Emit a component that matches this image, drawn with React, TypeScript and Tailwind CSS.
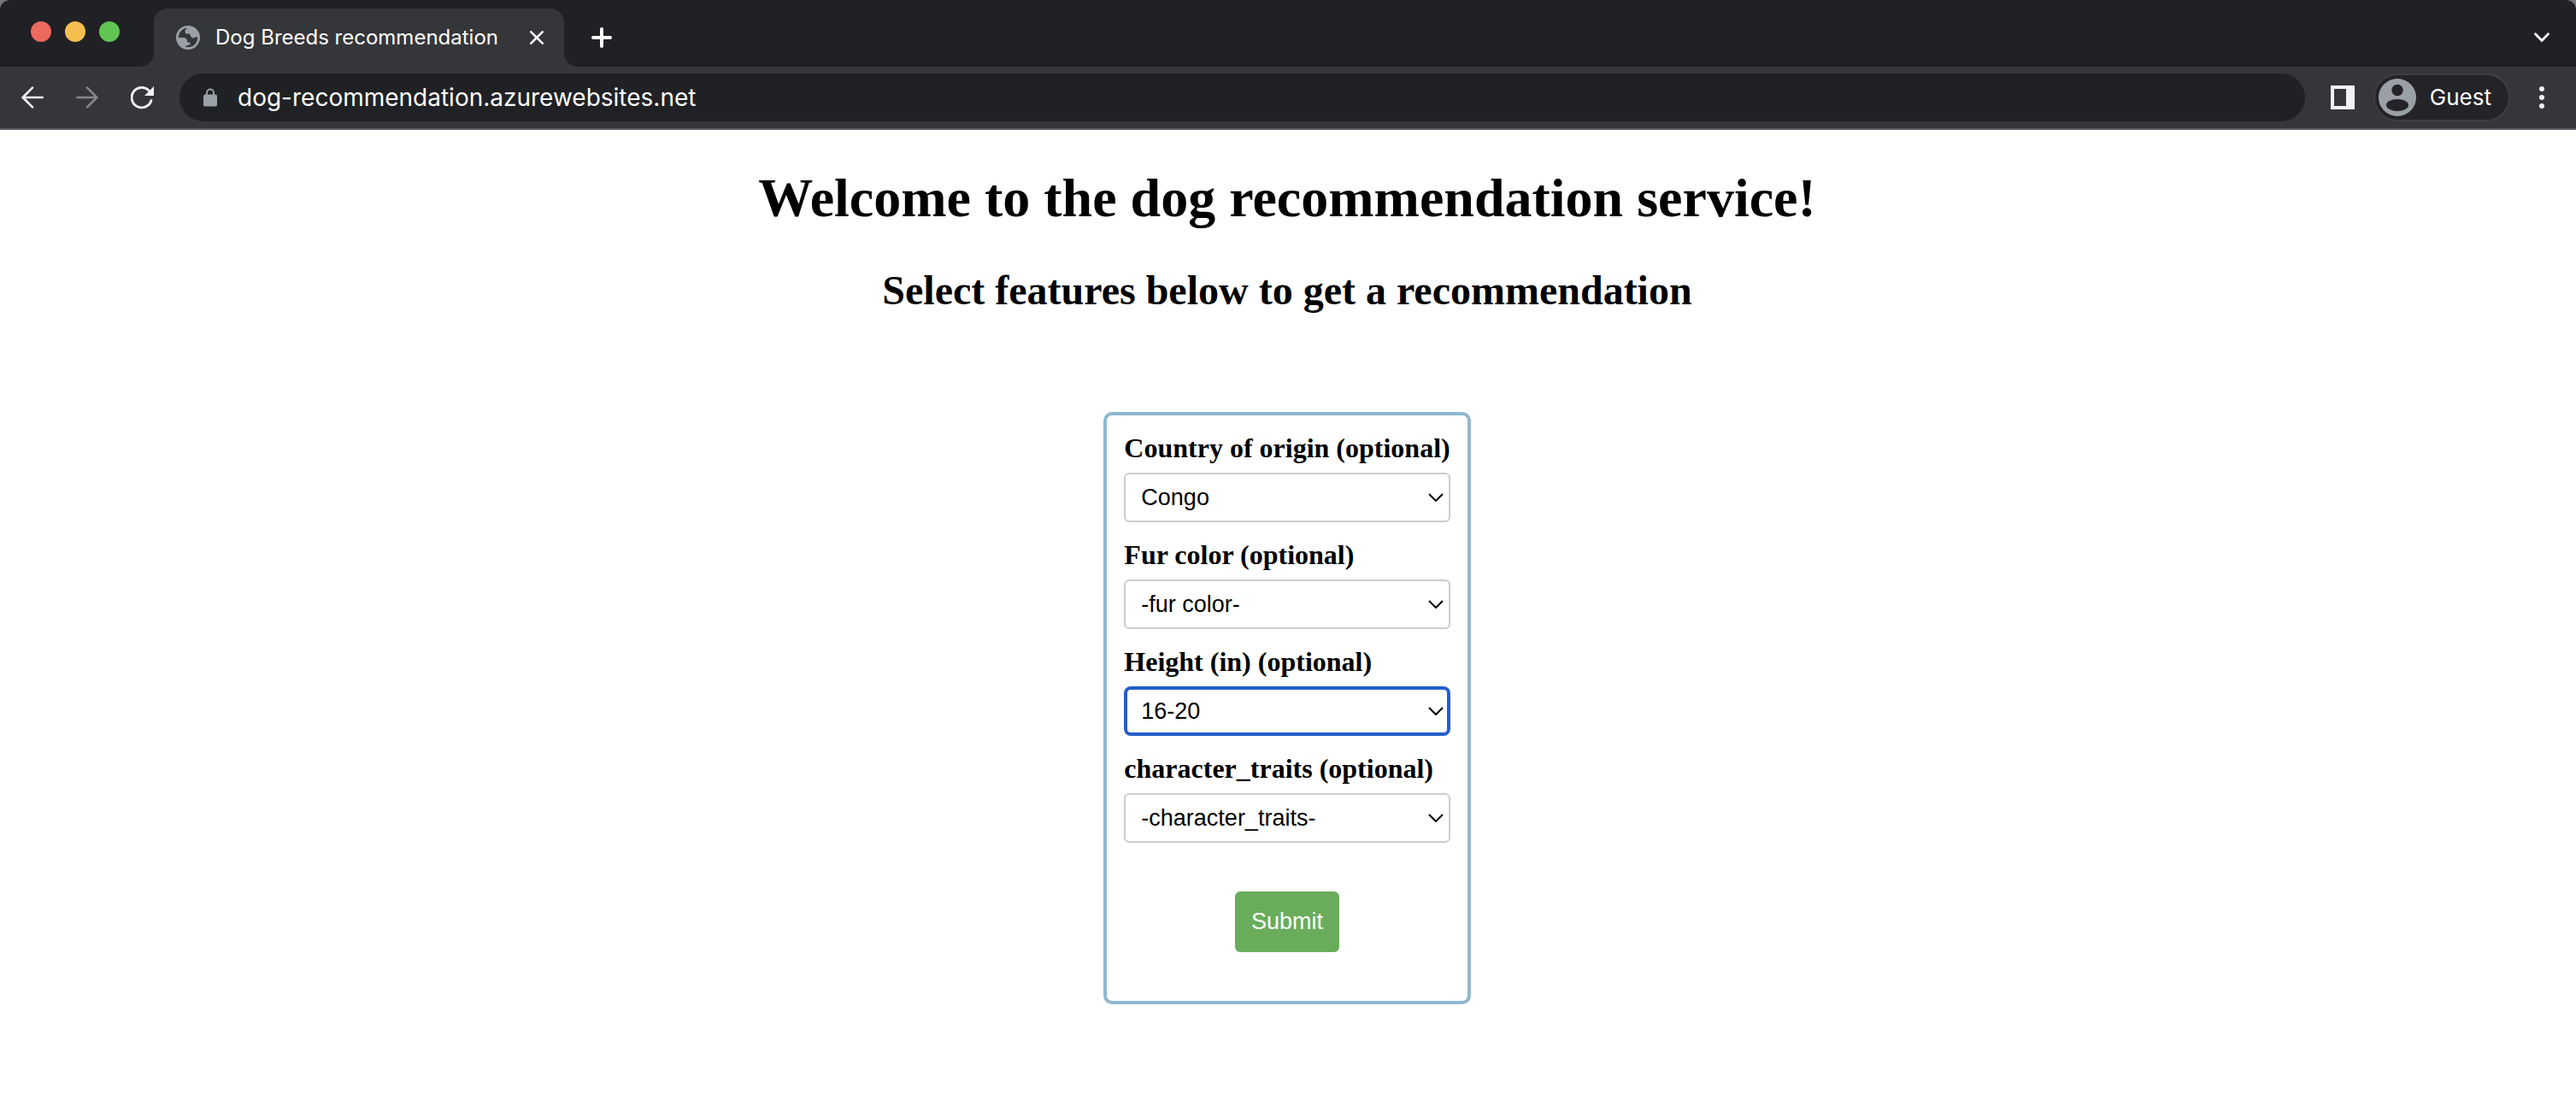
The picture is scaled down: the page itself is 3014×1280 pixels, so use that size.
import { useState } from "react";

type Field = {
  id: string;
  label: string;
  options: string[];
  initial: string;
  active?: boolean;
};

const fields: Field[] = [
  {
    id: "country",
    label: "Country of origin (optional)",
    options: ["-country of origin-", "Congo"],
    initial: "Congo",
  },
  {
    id: "fur",
    label: "Fur color (optional)",
    options: ["-fur color-"],
    initial: "-fur color-",
  },
  {
    id: "height",
    label: "Height (in) (optional)",
    options: ["-height-", "16-20"],
    initial: "16-20",
    active: true,
  },
  {
    id: "traits",
    label: "character_traits (optional)",
    options: ["-character_traits-"],
    initial: "-character_traits-",
  },
];

function GlobeIcon() {
  return (
    <svg viewBox="0 0 28 28" className="size-7 shrink-0" aria-hidden="true">
      <circle cx="14" cy="14" r="12.6" fill="none" stroke="#9aa0a6" strokeWidth="2.8" />
      <path
        d="M2 14 H8 C11 14 13 15.5 13 18 V19.5 H15.5 C16.5 19.5 17 20.5 16.5 21.5 C15.5 23 13 23 11 24 L10 27 C5 25.500 1 20 2 14Z"
        fill="#9aa0a6"
      />
      <path
        d="M15.500 1 C12.500 3 11 4.500 10.500 6 C10.300 7 11 7.500 11 8.500 C11 9.700 12 9.500 14 9.500 C16 9.500 16.500 10.500 17 12 C17.500 14 19 14.800 21 14.300 C22.500 14 23 12.800 26.500 13 C26.500 7 21.500 2 15.500 1Z"
        fill="#9aa0a6"
      />
    </svg>
  );
}

function LockIcon() {
  return (
    <svg viewBox="0 0 16 22" className="h-[22px] w-4 shrink-0" aria-hidden="true">
      <path d="M4 9 V5.500 a4 4 0 0 1 8 0 V9" fill="none" stroke="#9aa0a6" strokeWidth="2" />
      <rect x="0" y="7.500" width="16" height="14" rx="2" fill="#9aa0a6" />
    </svg>
  );
}

function ArrowIcon({ flip }: { flip?: boolean }) {
  return (
    <svg
      viewBox="0 0 26 26"
      className={flip ? "size-[26px] rotate-180 text-[#85868a]" : "size-[26px] text-[#f1f3f4]"}
      fill="none"
      stroke="currentColor"
      strokeWidth="2.600"
      strokeLinecap="round"
      aria-hidden="true"
    >
      <path d="M24.700 13 H2 M13 1.700 L1.700 13 L13 24.300" />
    </svg>
  );
}

function ReloadIcon() {
  return (
    <svg viewBox="1 0 28 28" className="size-7" aria-hidden="true">
      <path
        d="M25 17.500 A11.700 11.700 0 1 1 22 5.800"
        fill="none"
        stroke="#f1f3f4"
        strokeWidth="2.800"
        strokeLinecap="round"
      />
      <path d="M28 1 V12 H17Z" fill="#f1f3f4" />
    </svg>
  );
}

function TabStrip() {
  return (
    <div className="flex h-[78px] bg-[#35363a]">
      <div className="flex w-[180px] items-center gap-4 rounded-br-2xl bg-[#202124] pb-1 pl-9">
        <button type="button" aria-label="Close window" className="size-6 rounded-full bg-[#ed6a5e]" />
        <button type="button" aria-label="Minimize window" className="size-6 rounded-full bg-[#f5bf4f]" />
        <button type="button" aria-label="Zoom window" className="size-6 rounded-full bg-[#61c554]" />
      </div>
      <div className="w-[480px] bg-[#202124] pt-[10px]">
        <div className="flex h-full items-center rounded-t-2xl bg-[#35363a] pr-6 pl-[26px]">
          <GlobeIcon />
          <span className="ml-[18px] grow text-[24px] leading-8 whitespace-nowrap text-white">
            Dog Breeds recommendation
          </span>
          <button type="button" aria-label="Close tab">
            <svg viewBox="0 0 16 16" className="size-4" stroke="#ffffff" strokeWidth="2.600" strokeLinecap="round">
              <path d="M1.300 1.300 L14.700 14.700 M14.700 1.300 L1.300 14.700" />
            </svg>
          </button>
        </div>
      </div>
      <div className="flex grow items-center justify-between rounded-bl-2xl bg-[#202124] pt-[10px] pr-[31px] pl-8">
        <button type="button" aria-label="New tab">
          <svg viewBox="0 0 24 24" className="size-6" stroke="#ffffff" strokeWidth="4" strokeLinecap="round">
            <path d="M12 2 V22 M2 12 H22" />
          </svg>
        </button>
        <button type="button" aria-label="Search tabs">
          <svg viewBox="0 0 18 12" className="h-3 w-[18px]" fill="none" stroke="#ffffff" strokeWidth="2.800" strokeLinecap="round">
            <path d="M1.500 1.800 L9 9.500 L16.500 1.800" />
          </svg>
        </button>
      </div>
    </div>
  );
}

function Toolbar() {
  return (
    <div className="flex h-[74px] items-center border-b-2 border-[#5f5c62] bg-[#35363a] pr-[37px] pl-[25px]">
      <div className="flex items-center gap-[38px]">
        <button type="button" aria-label="Back">
          <ArrowIcon />
        </button>
        <button type="button" aria-label="Forward">
          <ArrowIcon flip />
        </button>
        <button type="button" aria-label="Reload">
          <ReloadIcon />
        </button>
      </div>
      <div className="ml-[29px] flex h-14 grow items-center gap-6 rounded-full bg-[#202124] px-7">
        <LockIcon />
        <input
          type="text"
          aria-label="Address"
          defaultValue="dog-recommendation.azurewebsites.net"
          className="h-10 min-w-0 grow bg-transparent text-[28px] text-white outline-none"
        />
      </div>
      <button type="button" aria-label="Side panel" className="ml-[30px]">
        <svg viewBox="0 0 28 28" className="size-7" aria-hidden="true">
          <path fillRule="evenodd" d="M0 0 H28 V28 H0Z M4 4 V24 H18 V4Z" fill="#f1f3f4" />
        </svg>
      </button>
      <button
        type="button"
        className="ml-[22px] flex h-14 items-center gap-4 rounded-full border-2 border-[#3f3e43] bg-[#242328] pr-5 pl-1 text-[26px] leading-8 text-white"
      >
        <svg viewBox="0 0 44 44" className="size-11" aria-hidden="true">
          <circle cx="22" cy="22" r="22" fill="#9aa0a6" />
          <circle cx="22" cy="13.500" r="6.700" fill="#242328" />
          <ellipse cx="22" cy="31" rx="13" ry="7" fill="#242328" />
        </svg>
        Guest
      </button>
      <button type="button" aria-label="Menu" className="ml-auto pl-[34px]">
        <svg viewBox="0 0 6 26" className="h-[26px] w-[6px]" fill="#f1f3f4">
          <circle cx="3" cy="3" r="3" />
          <circle cx="3" cy="13" r="3" />
          <circle cx="3" cy="23" r="3" />
        </svg>
      </button>
    </div>
  );
}

function SelectField({ id, label, options, initial, active }: Field) {
  const [value, setValue] = useState(initial);
  return (
    <div className="mb-5">
      <label htmlFor={id} className="block text-[32px] leading-[37px] font-bold whitespace-nowrap">
        {label}
      </label>
      <div className="relative mt-[10px] font-['Liberation_Sans',sans-serif]">
        <select
          id={id}
          value={value}
          onChange={(event) => setValue(event.target.value)}
          className={
            active
              ? "block h-[58px] w-full appearance-none rounded-lg border-4 border-[#255dcb] bg-white px-4 text-[27px] outline-none"
              : "block h-[58px] w-full appearance-none rounded-md border-2 border-[#cccccc] bg-white px-[18px] text-[27px] outline-none"
          }
        >
          {options.map((option) => (
            <option key={option}>{option}</option>
          ))}
        </select>
        <svg
          viewBox="0 0 18 10"
          className="pointer-events-none absolute top-6 right-2 h-[10px] w-[18px]"
          fill="none"
          stroke="#000000"
          strokeWidth="2"
          aria-hidden="true"
        >
          <path d="M1 1 L9 9 L17 1" />
        </svg>
      </div>
    </div>
  );
}

export default function App() {
  return (
    <div className="min-h-screen bg-white text-black">
      <header className="bg-[#77777a] font-[Inter,sans-serif]">
        <div className="overflow-hidden rounded-t-xl">
          <TabStrip />
          <Toolbar />
        </div>
      </header>
      <main className="flex flex-col items-center pt-[43px] pr-[18px] pb-4 pl-4 font-['Liberation_Serif',serif]">
        <h1 className="text-center text-[64px] leading-[74px] font-bold">
          Welcome to the dog recommendation service!
        </h1>
        <h2 className="mt-[43px] text-center text-[48px] leading-[55px] font-bold">
          Select features below to get a recommendation
        </h2>
        <form
          onSubmit={(event) => event.preventDefault()}
          className="mt-[115px] flex flex-col rounded-[10px] border-4 border-[#8fb8cf] p-5"
        >
          {fields.map((field) => (
            <SelectField key={field.id} {...field} />
          ))}
          <button
            type="submit"
            className="my-[37px] self-center rounded-md bg-[#69ad5c] px-[19px] py-5 font-['Liberation_Sans',sans-serif] text-[27px] leading-[31px] text-white"
          >
            Submit
          </button>
        </form>
      </main>
    </div>
  );
}
